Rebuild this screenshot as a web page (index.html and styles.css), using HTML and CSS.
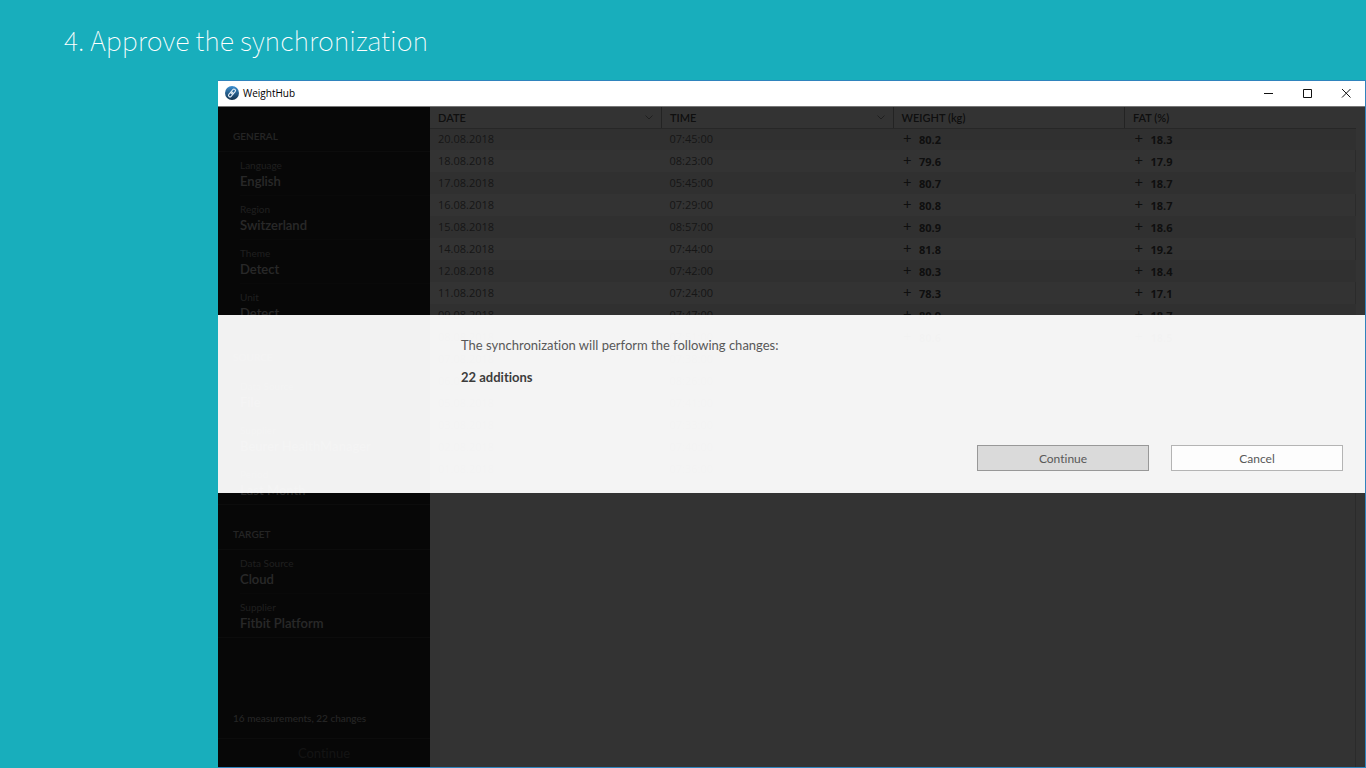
FILE: index.html
```html
<!DOCTYPE html>
<html lang="en">
  <head>
    <meta charset="UTF-8" />
    <meta name="viewport" content="width=device-width, initial-scale=1.0" />
    <title>WeightHub</title>
    <link rel="stylesheet" href="styles.css">
  </head>
  <body>
    <h1>4. Approve the synchronization</h1>
    <div class="window">
      <div class="titlebar">
        <svg class="logo" viewBox="0 0 14 14">
          <defs>
            <linearGradient id="ball" x1="0" y1="0" x2="0" y2="1">
              <stop offset="0" stop-color="#3c8fd0" />
              <stop offset="1" stop-color="#12304c" />
            </linearGradient>
          </defs>
          <circle cx="7" cy="7" r="7" fill="url(#ball)" />
          <g fill="none" stroke="#e4eef6" stroke-width="1.1" transform="rotate(-50 7 7)">
            <rect x="2.4" y="5.5" width="5.4" height="3" rx="1.5" />
            <rect x="6.2" y="5.5" width="5.4" height="3" rx="1.5" />
          </g>
        </svg>
        <span class="app-name">WeightHub</span>
        <button class="win-btn" aria-label="Minimize">
          <svg viewBox="0 0 10 10"><path d="M1 5.5h9" /></svg>
        </button>
        <button class="win-btn" aria-label="Maximize">
          <svg viewBox="0 0 10 10"><path d="M1.5 1.5h8v8h-8z" /></svg>
        </button>
        <button class="win-btn" aria-label="Close">
          <svg viewBox="0 0 10 10"><path d="M1 1l8.500 8.500M9.500 1l-8.500 8.500" /></svg>
        </button>
      </div>
      <div class="content">
        <div class="sidebar">
          <h2>GENERAL</h2>
          <div class="group">
            <button class="item"><span>Language</span><b>English</b></button>
            <button class="item"><span>Region</span><b>Switzerland</b></button>
            <button class="item"><span>Theme</span><b>Detect</b></button>
            <button class="item"><span>Unit</span><b>Detect</b></button>
          </div>
          <h2>SOURCE</h2>
          <div class="group">
            <button class="item"><span>Data Source</span><b>File</b></button>
            <button class="item"><span>Supplier</span><b>Beurer HealthManager</b></button>
            <button class="item"><span>Period</span><b>Last Month</b></button>
          </div>
          <h2>TARGET</h2>
          <div class="group">
            <button class="item"><span>Data Source</span><b>Cloud</b></button>
            <button class="item"><span>Supplier</span><b>Fitbit Platform</b></button>
          </div>
          <p class="status">16 measurements, 22 changes</p>
          <button class="next">Continue</button>
        </div>
        <div class="list">
          <table>
            <thead>
              <tr>
                <th><div>DATE <svg viewBox="0 0 8 5"><path d="M.5.5L4 4 7.500.5" /></svg></div></th>
                <th><div>TIME <svg viewBox="0 0 8 5"><path d="M.5.5L4 4 7.500.5" /></svg></div></th>
                <th><div>WEIGHT (kg)</div></th>
                <th><div>FAT (%)</div></th>
              </tr>
            </thead>
            <tbody>
              <tr><td>20.08.2018</td><td>07:45:00</td><td><i>+</i>80.2</td><td><i>+</i>18.3</td></tr>
              <tr><td>18.08.2018</td><td>08:23:00</td><td><i>+</i>79.6</td><td><i>+</i>17.9</td></tr>
              <tr><td>17.08.2018</td><td>05:45:00</td><td><i>+</i>80.7</td><td><i>+</i>18.7</td></tr>
              <tr><td>16.08.2018</td><td>07:29:00</td><td><i>+</i>80.8</td><td><i>+</i>18.7</td></tr>
              <tr><td>15.08.2018</td><td>08:57:00</td><td><i>+</i>80.9</td><td><i>+</i>18.6</td></tr>
              <tr><td>14.08.2018</td><td>07:44:00</td><td><i>+</i>81.8</td><td><i>+</i>19.2</td></tr>
              <tr><td>12.08.2018</td><td>07:42:00</td><td><i>+</i>80.3</td><td><i>+</i>18.4</td></tr>
              <tr><td>11.08.2018</td><td>07:24:00</td><td><i>+</i>78.3</td><td><i>+</i>17.1</td></tr>
              <tr><td>09.08.2018</td><td>07:47:00</td><td><i>+</i>80.9</td><td><i>+</i>18.7</td></tr>
              <tr><td>08.08.2018</td><td>07:51:00</td><td><i>+</i>80.6</td><td><i>+</i>18.5</td></tr>
              <tr><td>07.08.2018</td><td>07:38:00</td><td></td><td></td></tr>
              <tr><td>06.08.2018</td><td>08:26:00</td><td></td><td></td></tr>
              <tr><td>05.08.2018</td><td>07:41:00</td><td></td><td></td></tr>
              <tr><td>03.08.2018</td><td>07:33:00</td><td></td><td></td></tr>
              <tr><td>02.08.2018</td><td>07:40:00</td><td></td><td></td></tr>
              <tr><td>01.08.2018</td><td>07:36:00</td><td></td><td></td></tr>
            </tbody>
          </table>
        </div>
        <div class="overlay">
          <div class="dialog" role="dialog">
            <p>The synchronization will perform the following changes:</p>
            <p><strong>22 additions</strong></p>
            <div class="actions">
              <button class="primary">Continue</button>
              <button>Cancel</button>
            </div>
          </div>
        </div>
      </div>
    </div>
  </body>
</html>
```

FILE: styles.css
```css
* {
  margin: 0;
  padding: 0;
  box-sizing: border-box;
}
body {
  background-color: #18aebc;
  height: 100vh;
  display: flex;
  flex-direction: column;
  font-family: Lato, sans-serif;
  font-variant-ligatures: none;
}
button {
  border: 0;
  background: none;
  font-family: inherit;
  font-variant-ligatures: none;
  cursor: pointer;
}
h1 {
  height: 80px;
  padding-left: 64px;
  color: #fff;
  font-family: "Noto Sans CJK SC", sans-serif;
  font-size: 27px;
  font-weight: 100;
  line-height: 80px;
}
.window {
  flex: 1;
  min-height: 0;
  margin-left: 218px;
  border: 1px solid #2f84bd;
  border-left: 0;
  display: flex;
  flex-direction: column;
}
.titlebar {
  height: 26px;
  padding: 0 0 2px 7px;
  border-bottom: 1px solid #777;
  background: #fff;
  display: flex;
  align-items: center;
}
.logo {
  width: 14px;
  height: 14px;
}
.app-name {
  flex: 1;
  margin-left: 4px;
  font-family: "Open Sans", sans-serif;
  font-size: 10px;
  color: #000;
}
.win-btn {
  width: 39px;
  height: 23px;
}
.win-btn svg {
  width: 10px;
  height: 10px;
  fill: none;
  stroke: #111;
}
.content {
  flex: 1;
  min-height: 0;
  position: relative;
  display: flex;
  background: #fff;
}

/* sidebar */
.sidebar {
  width: 212px;
  background: #242424;
  display: flex;
  flex-direction: column;
}
h2 {
  height: 44px;
  padding: 22px 15px 0;
  font-size: 10px;
  font-weight: 600;
  line-height: 14px;
  color: #b4b4b4;
}
.group {
  border-top: 1px solid #3e3e3e;
  border-bottom: 1px solid #3e3e3e;
}
.item {
  display: block;
  width: 190px;
  height: 43px;
  margin-left: 22px;
  color: #c8c8c8;
  text-align: left;
}
.item + .item {
  height: 44px;
  border-top: 1px solid #303030;
}
.item span {
  display: block;
  font-size: 10px;
  line-height: 14px;
  color: #969696;
}
.item b {
  display: block;
  font-size: 13px;
  line-height: 18px;
  font-weight: 600;
}
.status {
  margin-top: auto;
  padding: 0 15px 12px;
  font-size: 10px;
  font-weight: 500;
  line-height: 16px;
  color: #b4b4b4;
}
.next {
  height: 29px;
  border-top: 1px solid #3e3e3e;
  font-size: 13px;
  color: #606060;
}

/* measurements */
.list {
  flex: 1;
  padding-right: 9px;
  background: linear-gradient(to left, transparent 9px, #d8d8d8 9px, #d8d8d8 10px, transparent 10px);
}
table {
  width: 100%;
  border-collapse: collapse;
  table-layout: fixed;
  font-family: "Open Sans", sans-serif;
  font-size: 11px;
}
th {
  height: 21px;
  padding: 0 8px;
  border-bottom: 1px solid #c0c0c0;
  background: #fff;
  font-family: Lato, sans-serif;
  font-size: 11px;
  font-weight: 600;
  text-align: left;
  color: #4a4a4a;
}
th + th {
  border-left: 1px solid #b0b0b0;
}
th div {
  display: flex;
  justify-content: space-between;
  align-items: center;
}
th svg {
  width: 8px;
  height: 5px;
  fill: none;
  stroke: #999;
}
td {
  height: 22px;
  padding: 0 8px;
  line-height: 16px;
  color: #707070;
}
tr:nth-child(odd) td {
  background: #f0f0f0;
}
td:nth-child(n + 3) {
  font-weight: 700;
  color: #4a4a4a;
}
td i {
  display: inline-block;
  width: 18px;
  padding-left: 2px;
  font-size: 15px;
  font-style: normal;
  font-weight: 400;
  line-height: 16px;
}

/* confirmation */
.overlay {
  position: absolute;
  inset: 0;
  padding-top: 208px;
  background: rgba(0, 0, 0, 0.8);
}
.dialog {
  padding: 20px 22px 22px 243px;
  background: rgba(255, 255, 255, 0.95);
  color: #585858;
  font-size: 13px;
  line-height: 20px;
}
.dialog p {
  margin-bottom: 12px;
}
.dialog strong {
  color: #3c3c3c;
}
.actions {
  margin-top: 58px;
  display: flex;
  justify-content: flex-end;
  gap: 22px;
}
.actions button {
  width: 172px;
  height: 26px;
  border: 1px solid #b4b4b4;
  background: #fdfdfd;
  color: #585858;
  font-size: 12px;
}
.actions .primary {
  border-color: #989898;
  background: #dadada;
}
```
